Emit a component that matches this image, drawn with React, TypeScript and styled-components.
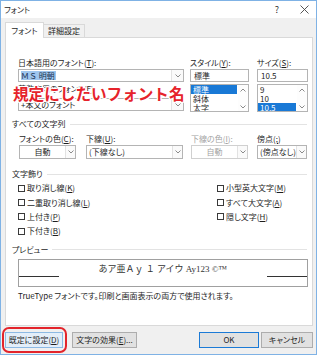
import React from "react";
import styled, { createGlobalStyle } from "styled-components";

const FONT = `"Noto Sans CJK JP", "Noto Sans", sans-serif`;

const GlobalStyle = createGlobalStyle`
  html, body { margin: 0; padding: 0; background: #fff; }
  body { font-family: ${FONT}; }
  #root { width: 320px; height: 355px; overflow: hidden; }
`;

const Window = styled.div`
  width: 317px;
  height: 355px;
  box-sizing: border-box;
  border: 1px solid #7fb2e5;
  background: #f0f0f0;
  display: flex;
  flex-direction: column;
  font-family: ${FONT};
  font-size: 8px;
  line-height: 10px;
  color: #1e1e1e;
  font-feature-settings: "palt";
`;

const TitleBar = styled.div`
  height: 17px;
  background: #fff;
  display: flex;
  align-items: center;
  padding-left: 3px;
`;

const TitleText = styled.span`
  flex: 1;
`;

const TitleButton = styled.div<{ $gap?: number }>`
  width: 24px;
  height: 17px;
  display: flex;
  align-items: center;
  justify-content: center;
  margin-right: ${(p) => p.$gap ?? 0}px;
  font-size: 9px;
  color: #333;
`;

const Body = styled.div`
  padding: 4px 3px 0 4px;
  display: flex;
  flex-direction: column;
`;

const TabRow = styled.div`
  display: flex;
  align-items: flex-end;
  height: 15px;
`;

const Tab = styled.div<{ $active?: boolean; $w: number }>`
  width: ${(p) => p.$w}px;
  height: ${(p) => (p.$active ? 16 : 13)}px;
  box-sizing: border-box;
  display: flex;
  align-items: center;
  justify-content: center;
  background: ${(p) => (p.$active ? "#fff" : "#f0f0f0")};
  border: 1px solid #d9d9d9;
  border-bottom: none;
  ${(p) => (p.$active ? "" : "border-left: none;")}
  position: relative;
  z-index: 1;
  margin-bottom: ${(p) => (p.$active ? -1 : 0)}px;
`;

const Panel = styled.div`
  height: 289px;
  box-sizing: border-box;
  border: 1px solid #d9d9d9;
  background: #fff;
  padding: 20px 5px 0 12px;
  display: flex;
  flex-direction: column;
`;

const TopGrid = styled.div`
  display: flex;
  position: relative;
`;

const Column = styled.div<{ $w: number; $ml?: number }>`
  width: ${(p) => p.$w}px;
  margin-left: ${(p) => p.$ml ?? 0}px;
  display: flex;
  flex-direction: column;
  flex-shrink: 0;
`;

const Label = styled.div<{ $disabled?: boolean }>`
  height: 10px;
  white-space: nowrap;
  color: ${(p) => (p.$disabled ? "#a3a3a3" : "#1e1e1e")};
`;

const Key = styled.span`
  text-decoration: underline;
  text-underline-offset: 1px;
`;

const ComboBox = styled.div<{ $h: number; $mt: number; $disabled?: boolean }>`
  height: ${(p) => p.$h}px;
  margin-top: ${(p) => p.$mt}px;
  box-sizing: border-box;
  border: 1px solid ${(p) => (p.$disabled ? "#d0d0d0" : "#b4b4b4")};
  background: #fff;
  display: flex;
  color: ${(p) => (p.$disabled ? "#a3a3a3" : "#1e1e1e")};
`;

const ComboText = styled.div<{ $center?: boolean }>`
  flex: 1;
  display: flex;
  align-items: center;
  justify-content: ${(p) => (p.$center ? "center" : "flex-start")};
  padding-left: ${(p) => (p.$center ? 0 : 2)}px;
  white-space: nowrap;
  overflow: hidden;
`;

const Selected = styled.span`
  background: #9fc6ee;
  color: #1b3352;
  font-feature-settings: normal;
  line-height: 9px;
  padding-right: 1px;
`;

const DropButton = styled.div<{ $w: number }>`
  width: ${(p) => p.$w}px;
  border-left: 1px solid #e2e2e2;
  background: #fafafa;
  display: flex;
  align-items: center;
  justify-content: center;
`;

const TextBox = styled.div`
  height: 13px;
  margin-top: 1px;
  box-sizing: border-box;
  border: 1px solid #b4b4b4;
  display: flex;
  align-items: center;
  padding-left: 3px;
`;

const ListBox = styled.div`
  height: 28px;
  margin-top: 2px;
  box-sizing: border-box;
  border: 1px solid #b4b4b4;
  display: flex;
  overflow: hidden;
`;

const ListItems = styled.div`
  flex: 1;
  display: flex;
  flex-direction: column;
`;

const ListItem = styled.div<{ $selected?: boolean }>`
  height: 9px;
  line-height: 9px;
  padding-left: 2px;
  margin-right: 1px;
  background: ${(p) => (p.$selected ? "#1979d6" : "transparent")};
  color: ${(p) => (p.$selected ? "#fff" : "#1e1e1e")};
  flex-shrink: 0;
`;

const ScrollBar = styled.div`
  width: 10px;
  display: flex;
  flex-direction: column;
  justify-content: space-between;
  align-items: center;
  padding: 3px 0 2px;
  background: #fdfdfd;
`;

const SectionHeader = styled.div<{ $mt: number }>`
  display: flex;
  align-items: center;
  margin-left: -6px;
  margin-top: ${(p) => p.$mt}px;
  height: 10px;
`;

const SectionLine = styled.div`
  flex: 1;
  height: 1px;
  background: #e3e3e3;
  margin-left: 4px;
`;

const FieldRow = styled.div`
  display: flex;
  margin-top: 5px;
`;

const CheckArea = styled.div`
  display: flex;
  margin-top: 2px;
`;

const CheckColumn = styled.div<{ $w?: number }>`
  width: ${(p) => (p.$w ? `${p.$w}px` : "auto")};
  display: flex;
  flex-direction: column;
`;

const CheckRow = styled.div`
  height: 14.4px;
  display: flex;
  align-items: center;
  white-space: nowrap;
`;

const CheckBox = styled.div`
  width: 7px;
  height: 7px;
  box-sizing: border-box;
  border: 1px solid #3a3a3a;
  background: #fff;
  margin-right: 2px;
`;

const PreviewBox = styled.div`
  width: 290px;
  height: 28px;
  margin-top: 4px;
  box-sizing: border-box;
  border: 1px solid #a0a0a0;
  display: flex;
  align-items: flex-start;
`;

const PreviewEdge = styled.div`
  width: 40px;
  height: 1px;
  background: #333;
  margin-top: 16px;
`;

const PreviewText = styled.div`
  flex: 1;
  text-align: center;
  font-family: "Liberation Serif", "Noto Sans CJK JP", serif;
  font-size: 9px;
  line-height: 10px;
  padding-top: 4px;
  color: #333;
  font-feature-settings: normal;
  white-space: nowrap;
`;

const Note = styled.div`
  margin-top: 4px;
  white-space: nowrap;
`;

const ButtonRow = styled.div`
  position: relative;
  display: flex;
  margin-top: 6px;
  height: 16px;
`;

const Button = styled.div<{ $w: number; $ml?: string; $variant?: "default" | "hover" }>`
  width: ${(p) => p.$w}px;
  height: 16px;
  margin-left: ${(p) => p.$ml ?? "0"};
  box-sizing: border-box;
  display: flex;
  align-items: center;
  justify-content: center;
  white-space: nowrap;
  background: ${(p) => (p.$variant === "hover" ? "#e3eef9" : "#e1e1e1")};
  border: 1px solid
    ${(p) =>
      p.$variant === "default" ? "#1b7ad6" : p.$variant === "hover" ? "#8cb9e3" : "#adadad"};
`;

const RedRing = styled.div`
  position: absolute;
  left: -3px;
  top: -5px;
  width: 65px;
  height: 26px;
  box-sizing: border-box;
  border: 2px solid #e3242b;
  border-radius: 7px;
`;

const Annotation = styled.div`
  position: absolute;
  left: -5px;
  top: 27px;
  font-size: 15.6px;
  line-height: 17px;
  font-weight: 700;
  color: #e6232b;
  font-feature-settings: normal;
  white-space: nowrap;
  text-shadow: 1px 0 #fff, -1px 0 #fff, 0 1px #fff, 0 -1px #fff, 1px 1px #fff,
    -1px -1px #fff, 1px -1px #fff, -1px 1px #fff;
`;

const Chevron = ({ up }: { up?: boolean }) => (
  <svg width="6" height="4" viewBox="0 0 6 4">
    <polyline
      points={up ? "0.5,3.5 3,1 5.5,3.5" : "0.5,0.5 3,3 5.5,0.5"}
      fill="none"
      stroke="#8a8a8a"
      strokeWidth="1"
    />
  </svg>
);

const CloseIcon = () => (
  <svg width="9" height="9" viewBox="0 0 9 9">
    <path d="M0.5 0.5 L8.5 8.5 M8.5 0.5 L0.5 8.5" stroke="#444" strokeWidth="0.9" />
  </svg>
);

type ComboProps = {
  w: number;
  ml?: number;
  label: React.ReactNode;
  value: React.ReactNode;
  center?: boolean;
  disabled?: boolean;
  btn?: number;
};

const LabeledCombo = ({ w, ml, label, value, center, disabled, btn = 9 }: ComboProps) => (
  <Column $w={w} $ml={ml}>
    <Label $disabled={disabled}>{label}</Label>
    <ComboBox $h={14} $mt={1} $disabled={disabled}>
      <ComboText $center={center}>{value}</ComboText>
      <DropButton $w={btn}>
        <Chevron />
      </DropButton>
    </ComboBox>
  </Column>
);

const Check = ({ children }: { children: React.ReactNode }) => (
  <CheckRow>
    <CheckBox />
    <span>{children}</span>
  </CheckRow>
);

export default function App() {
  return (
    <>
      <GlobalStyle />
      <Window>
        <TitleBar>
          <TitleText>フォント</TitleText>
          <TitleButton $gap={3}>?</TitleButton>
          <TitleButton>
            <CloseIcon />
          </TitleButton>
        </TitleBar>
        <Body>
          <TabRow>
            <Tab $active $w={39}>フォント</Tab>
            <Tab $w={41}>詳細設定</Tab>
          </TabRow>
          <Panel>
            <TopGrid>
              <Column $w={166}>
                <Label>
                  日本語用のフォント(<Key>T</Key>):
                </Label>
                <ComboBox $h={13} $mt={1}>
                  <ComboText>
                    <Selected>ＭＳ 明朝</Selected>
                  </ComboText>
                  <DropButton $w={11}>
                    <Chevron />
                  </DropButton>
                </ComboBox>
                <Label style={{ marginTop: 2 }}>
                  英数字用のフォント(<Key>F</Key>):
                </Label>
                <ComboBox $h={13} $mt={4}>
                  <ComboText>+本文のフォント</ComboText>
                  <DropButton $w={11}>
                    <Chevron />
                  </DropButton>
                </ComboBox>
              </Column>
              <Column $w={59} $ml={6}>
                <Label>
                  スタイル(<Key>Y</Key>):
                </Label>
                <TextBox>標準</TextBox>
                <ListBox>
                  <ListItems>
                    <ListItem $selected>標準</ListItem>
                    <ListItem>斜体</ListItem>
                    <ListItem>太字</ListItem>
                  </ListItems>
                  <ScrollBar>
                    <Chevron up />
                    <Chevron />
                  </ScrollBar>
                </ListBox>
              </Column>
              <Column $w={51} $ml={8}>
                <Label>
                  サイズ(<Key>S</Key>):
                </Label>
                <TextBox>10.5</TextBox>
                <ListBox>
                  <ListItems>
                    <ListItem>9</ListItem>
                    <ListItem>10</ListItem>
                    <ListItem $selected>10.5</ListItem>
                  </ListItems>
                  <ScrollBar>
                    <Chevron up />
                    <Chevron />
                  </ScrollBar>
                </ListBox>
              </Column>
              <Annotation>規定にしたいフォント名</Annotation>
            </TopGrid>

            <SectionHeader $mt={7}>
              すべての文字列
              <SectionLine />
            </SectionHeader>
            <FieldRow>
              <LabeledCombo
                w={57}
                ml={1}
                center
                label={
                  <>
                    フォントの色(<Key>C</Key>):
                  </>
                }
                value="自動"
              />
              <LabeledCombo
                w={97}
                ml={10}
                label={
                  <>
                    下線(<Key>U</Key>):
                  </>
                }
                value="(下線なし)"
              />
              <LabeledCombo
                w={57}
                ml={8}
                center
                disabled
                label={
                  <>
                    下線の色(<Key>I</Key>):
                  </>
                }
                value="自動"
              />
              <LabeledCombo
                w={50}
                ml={9}
                label={
                  <>
                    傍点(<Key>;</Key>)
                  </>
                }
                value="(傍点なし)"
              />
            </FieldRow>

            <SectionHeader $mt={10}>
              文字飾り
              <SectionLine />
            </SectionHeader>
            <CheckArea>
              <CheckColumn $w={199}>
                <Check>
                  取り消し線(<Key>K</Key>)
                </Check>
                <Check>
                  二重取り消し線(<Key>L</Key>)
                </Check>
                <Check>
                  上付き(<Key>P</Key>)
                </Check>
                <Check>
                  下付き(<Key>B</Key>)
                </Check>
              </CheckColumn>
              <CheckColumn>
                <Check>
                  小型英大文字(<Key>M</Key>)
                </Check>
                <Check>
                  すべて大文字(<Key>A</Key>)
                </Check>
                <Check>
                  隠し文字(<Key>H</Key>)
                </Check>
              </CheckColumn>
            </CheckArea>

            <SectionHeader $mt={6}>
              プレビュー
              <SectionLine />
            </SectionHeader>
            <PreviewBox>
              <PreviewEdge />
              <PreviewText>あア亜Ａｙ １ アイウ Ay123 ©™</PreviewText>
              <PreviewEdge />
            </PreviewBox>
            <Note>TrueType フォントです。印刷と画面表示の両方で使用されます。</Note>
          </Panel>
          <ButtonRow>
            <Button $w={58} $variant="hover">
              既定に設定(<Key>D</Key>)
            </Button>
            <Button $w={65} $ml="9px">
              文字の効果(<Key>E</Key>)...
            </Button>
            <Button $w={60} $ml="auto" $variant="default">
              OK
            </Button>
            <Button $w={52} $ml="2px">
              キャンセル
            </Button>
            <RedRing />
          </ButtonRow>
        </Body>
      </Window>
    </>
  );
}
